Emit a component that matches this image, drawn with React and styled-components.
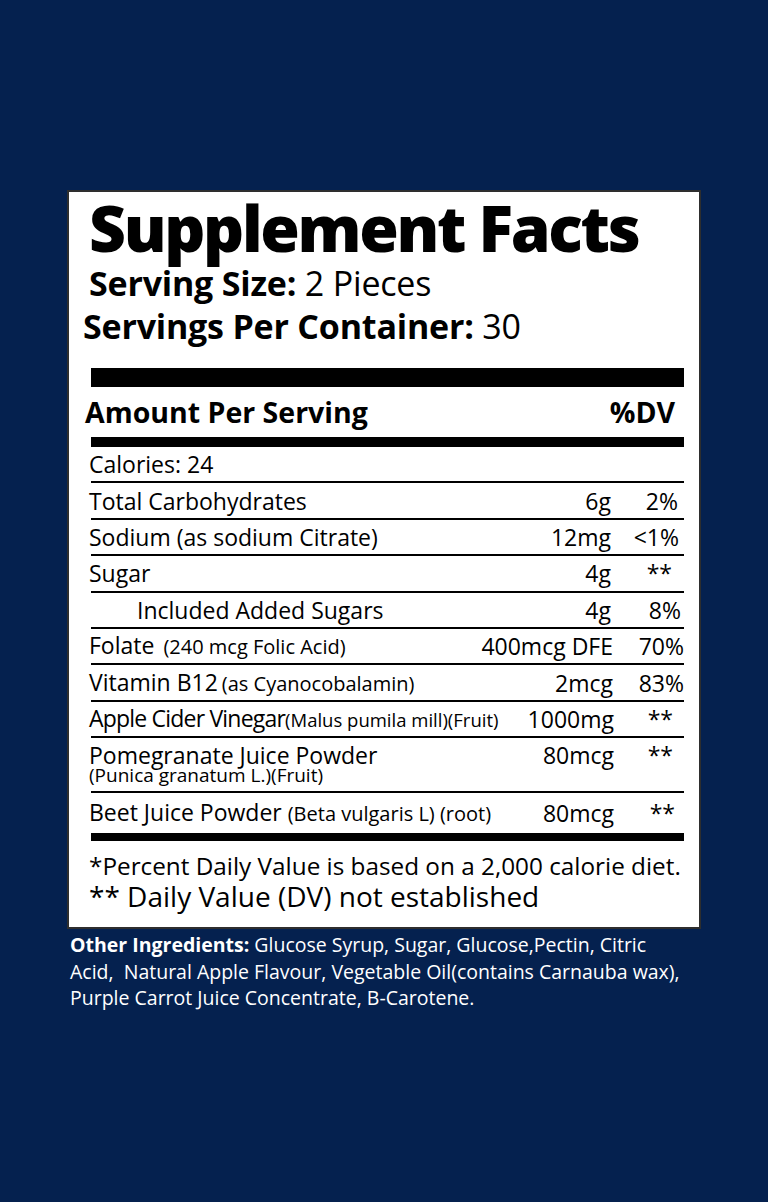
import React from 'react';
import styled, { createGlobalStyle } from 'styled-components';

const GlobalStyle = createGlobalStyle`
  html, body {
    margin: 0;
    padding: 0;
    background: #05214f;
  }
  body {
    font-family: "Open Sans", Lato, sans-serif;
    color: #000;
  }
`;

const Page = styled.div`
  width: 768px;
  height: 1202px;
  background: #05214f;
  padding-top: 190px;
  box-sizing: border-box;
`;

const Panel = styled.div`
  margin-left: 67px;
  width: 634px;
  height: 739px;
  box-sizing: border-box;
  background: #fff;
  border: 2px solid #2e2e2e;
  padding: 2px 15px 0 20px;
`;

const Title = styled.h1`
  margin: 0;
  font-size: 64px;
  font-weight: 800;
  line-height: 68px;
  letter-spacing: -2.3px;
`;

const Serving = styled.div`
  font-size: 34px;
  line-height: 43px;
  letter-spacing: -0.2px;
  margin-left: ${(p) => p.$shift || 0}px;
  b { font-weight: 700; }
`;

const Bar = styled.div`
  height: ${(p) => p.$h}px;
  background: #000;
  margin-left: 2px;
  margin-top: ${(p) => p.$top || 0}px;
`;

const AmountHead = styled.div`
  display: flex;
  justify-content: space-between;
  align-items: center;
  height: 50px;
  margin-left: -4px;
  padding-right: 9px;
  font-size: 28.5px;
  font-weight: 700;
`;

const Row = styled.div`
  display: grid;
  grid-template-columns: minmax(0, 1fr) 140px 70px;
  align-items: ${(p) => (p.$top ? 'start' : 'center')};
  height: ${(p) => p.$h || 36.4}px;
  padding-top: ${(p) => p.$pt || 0}px;
  box-sizing: border-box;
  border-bottom: ${(p) => (p.$last ? 'none' : '2px solid #000')};
  margin-left: 2px;
  font-size: 23px;
  white-space: nowrap;
`;

const Name = styled.div`
  margin-left: ${(p) => (p.$indent ? 46 : -2)}px;
  line-height: 24px;
  letter-spacing: ${(p) => p.$tight || 0}px;
`;

const Note = styled.span`
  font-size: ${(p) => p.$size || 20}px;
  letter-spacing: 0;
  margin-left: ${(p) => p.$gap || 0}px;
`;

const Sub = styled.div`
  font-size: 19px;
  line-height: 20px;
  margin-top: -2px;
`;

const Amount = styled.div`
  text-align: right;
  line-height: 24px;
  padding-right: ${(p) => p.$pr ?? 3}px;
`;

const Dv = styled.div`
  text-align: right;
  line-height: 24px;
  padding-right: ${(p) => p.$pr ?? 3}px;
`;

const Foot = styled.div`
  margin-top: ${(p) => p.$mt || 0}px;
  font-size: ${(p) => p.$size}px;
  line-height: ${(p) => p.$lh}px;
`;

const Ingredients = styled.p`
  margin: 3px 0 0 70px;
  color: #fff;
  font-size: 19.5px;
  line-height: 26.7px;
  white-space: nowrap;
  b { font-weight: 700; }
`;

const rows = [
  { name: 'Total Carbohydrates', amt: '6g', dv: '2%', dvPr: 6 },
  { name: 'Sodium (as sodium Citrate)', amt: '12mg', dv: '<1%', dvPr: 5 },
  { name: 'Sugar', amt: '4g', dv: '**', dvPr: 12 },
  { name: 'Included Added Sugars', indent: true, amt: '4g', dv: '8%' },
  { name: 'Folate', note: '(240 mcg Folic Acid)', gap: 9, amt: '400mcg DFE', amtPr: 1, dv: '70%', dvPr: 0 },
  { name: 'Vitamin B12', note: '(as Cyanocobalamin)', gap: 4, amt: '2mcg', amtPr: 1, dv: '83%', dvPr: 0 },
  {
    name: 'Apple Cider Vinegar',
    tight: -0.8,
    note: '(Malus pumila mill)(Fruit)',
    noteSize: 18.5,
    amt: '1000mg',
    amtPr: -3,
    dv: '**',
    dvPr: 11,
  },
];

export default function App() {
  return (
    <Page>
      <GlobalStyle />
      <Panel>
        <Title>Supplement Facts</Title>
        <Serving>
          <b>Serving Size:</b> 2 Pieces
        </Serving>
        <Serving $shift={-6}>
          <b>Servings Per Container:</b> 30
        </Serving>
        <Bar $h={19} $top={20} />
        <AmountHead>
          <span>Amount Per Serving</span>
          <span>%DV</span>
        </AmountHead>
        <Bar $h={10} />
        <Row>
          <Name>Calories: 24</Name>
        </Row>
        {rows.map((r) => (
          <Row key={r.name}>
            <Name $indent={r.indent} $tight={r.tight}>
              {r.name}
              {r.note && (
                <Note $gap={r.gap} $size={r.noteSize}>
                  {r.note}
                </Note>
              )}
            </Name>
            <Amount $pr={r.amtPr}>{r.amt}</Amount>
            <Dv $pr={r.dvPr}>{r.dv}</Dv>
          </Row>
        ))}
        <Row $h={55} $pt={5} $top>
          <Name>
            Pomegranate Juice Powder
            <Sub>(Punica granatum L.)(Fruit)</Sub>
          </Name>
          <Amount $pr={-3}>80mcg</Amount>
          <Dv $pr={11}>**</Dv>
        </Row>
        <Row $h={40} $last>
          <Name>
            Beet Juice Powder <Note>(Beta vulgaris L) (root)</Note>
          </Name>
          <Amount $pr={-1}>80mcg</Amount>
          <Dv $pr={9}>**</Dv>
        </Row>
        <Bar $h={8} />
        <Foot $size={24.3} $lh={30} $mt={10}>*Percent Daily Value is based on a 2,000 calorie diet.</Foot>
        <Foot $size={28} $lh={31}>** Daily Value (DV) not established</Foot>
      </Panel>
      <Ingredients>
        <b>Other Ingredients:</b> Glucose Syrup, Sugar, Glucose,Pectin, Citric
        <br />
        Acid,&nbsp; Natural Apple Flavour, Vegetable Oil(contains Carnauba wax),
        <br />
        Purple Carrot Juice Concentrate, B-Carotene.
      </Ingredients>
    </Page>
  );
}
